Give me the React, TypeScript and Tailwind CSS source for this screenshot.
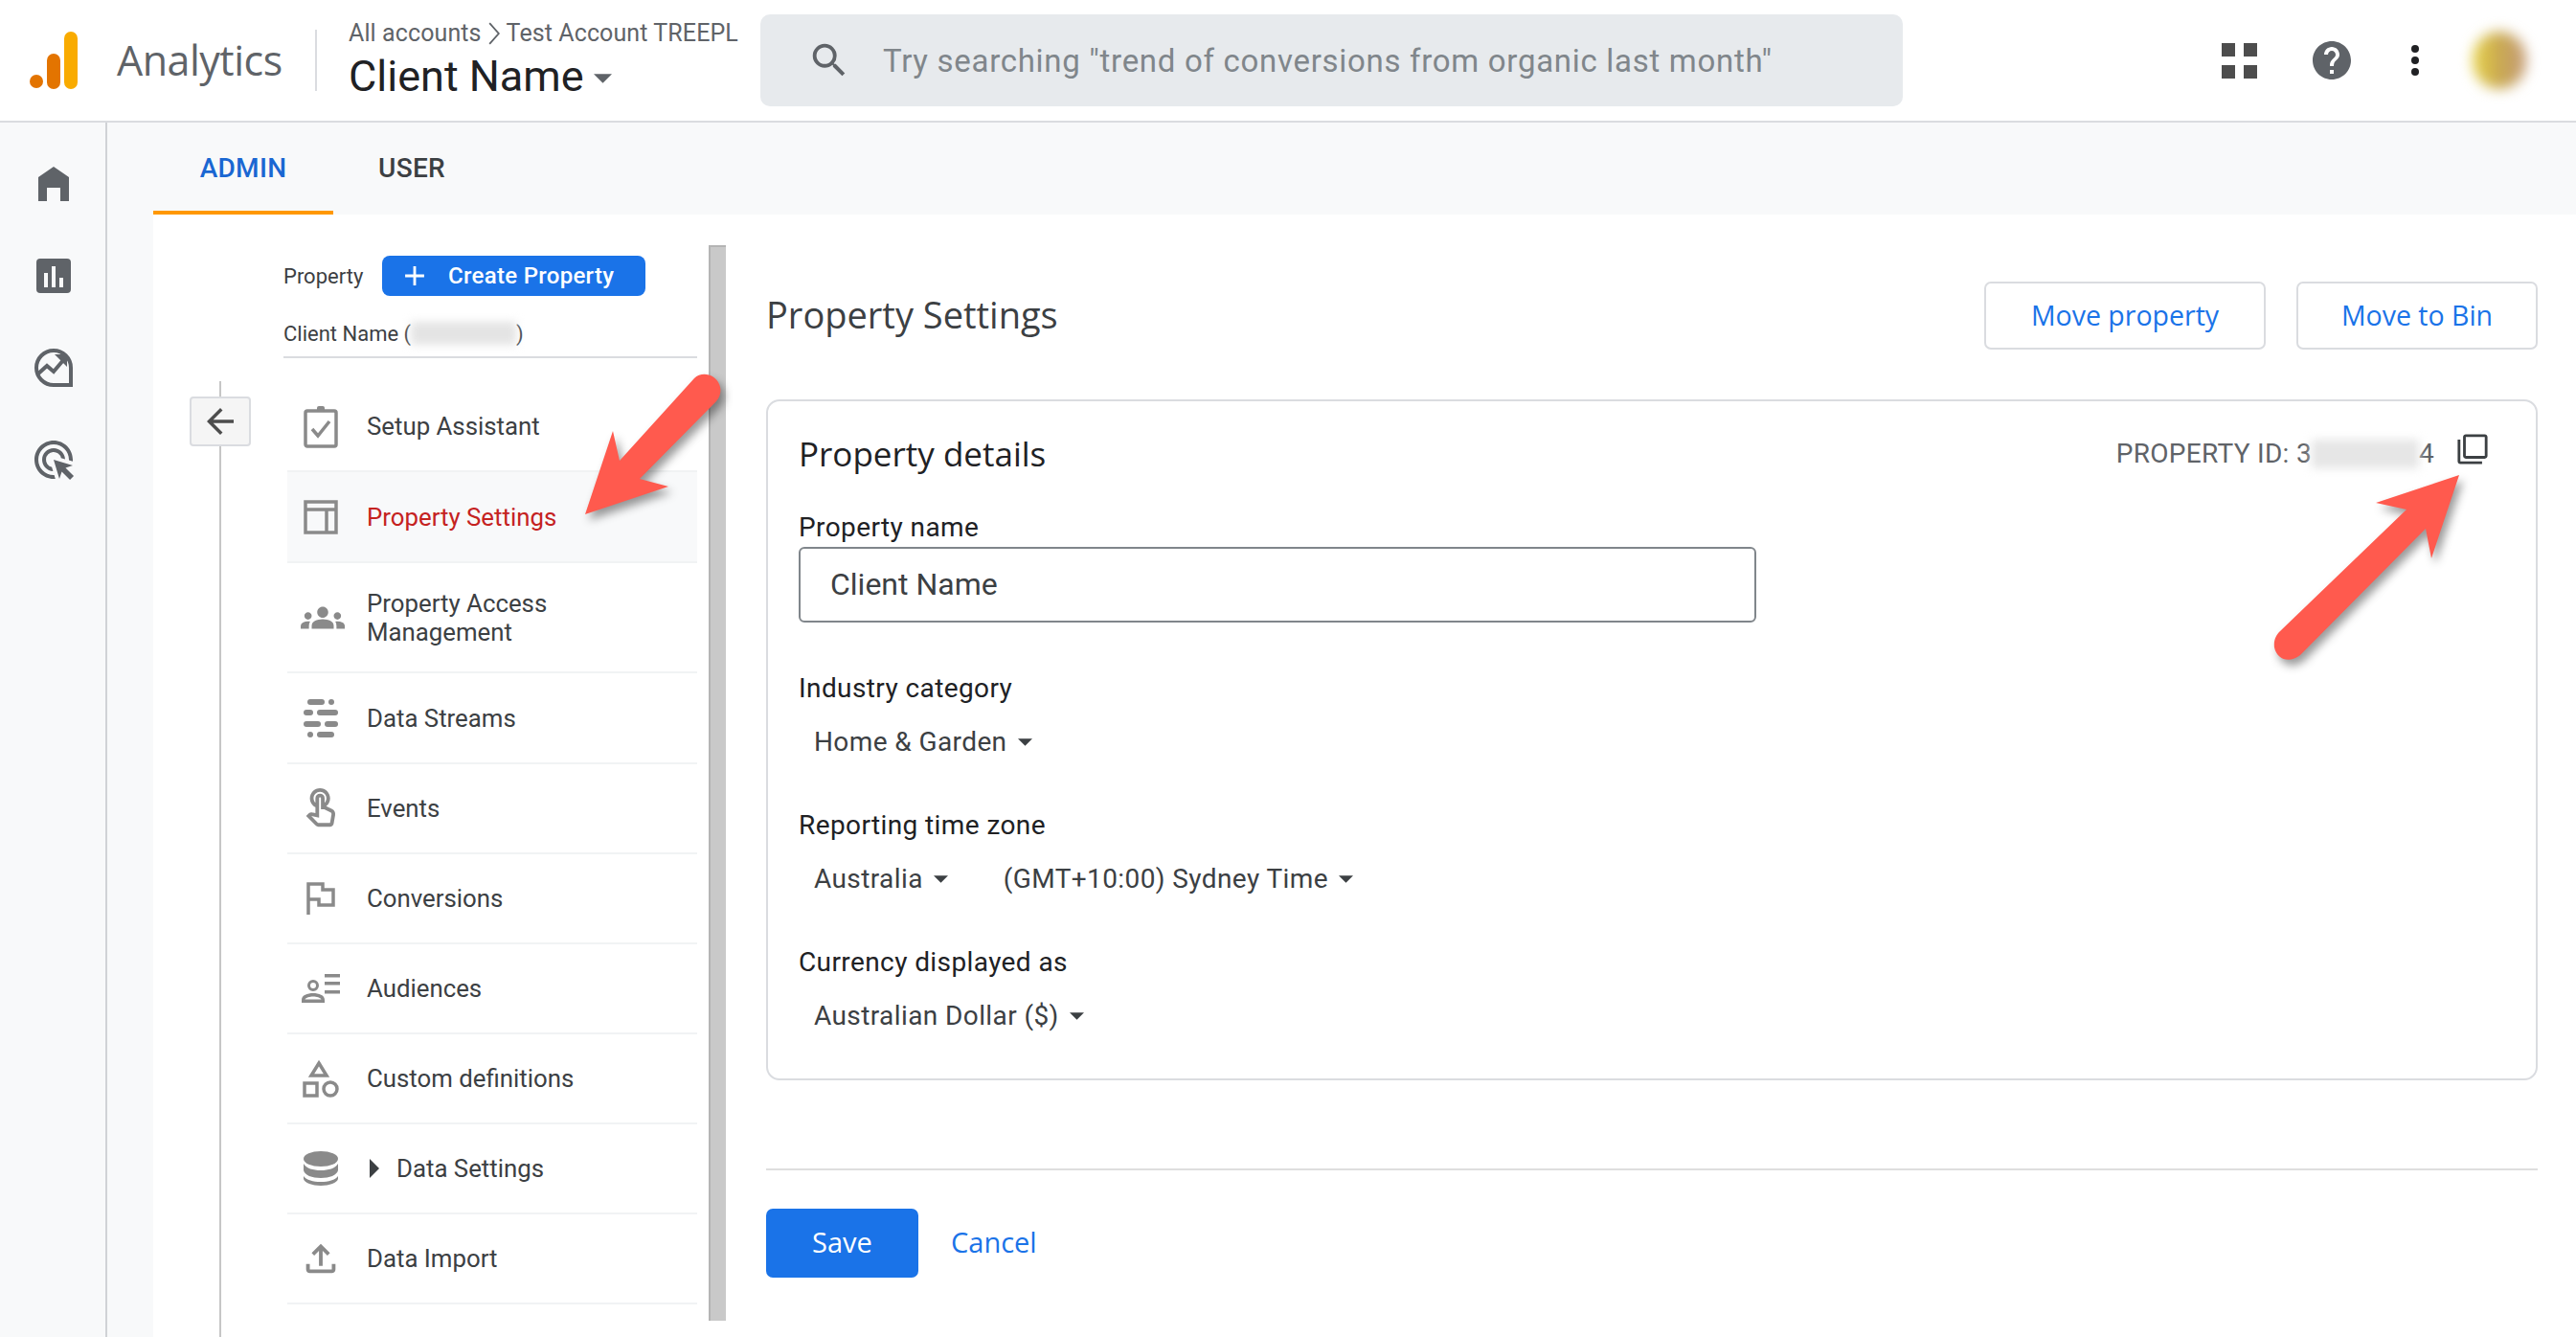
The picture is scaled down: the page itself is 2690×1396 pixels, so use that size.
import type { ReactNode } from "react";
import { MdOutlineAdsClick, MdOutlineTouchApp, MdOutlineFileUpload, MdSearch, MdHelp, MdGroups, MdFilterNone, MdArrowBack, MdAdd } from "react-icons/md";

const Caret = ({ className }: { className: string }) => (
  <svg viewBox="0 0 10 5" className={className} fill="currentColor">
    <path d="M0 0h10L5 5z" />
  </svg>
);

const SetupIcon = () => (
  <svg viewBox="0 0 36 46" className="w-[36px] h-[46px]" fill="none" stroke="#8a8a8a">
    <rect x="2" y="7" width="32" height="37" rx="2" strokeWidth="3.5" />
    <rect x="14" y="2" width="8" height="6" rx="2" fill="#8a8a8a" stroke="none" />
    <path d="M9 26l6 7 12-15" strokeWidth="3.5" />
  </svg>
);

const SettingsIcon = () => (
  <svg viewBox="0 0 36 36" className="w-[36px] h-[36px]" fill="none" stroke="#8a8a8a" strokeWidth="3.5">
    <rect x="2" y="2" width="32" height="32" />
    <path d="M2 10h32M24 10v24" />
  </svg>
);

const StreamsIcon = () => (
  <svg viewBox="0 0 36 40" className="w-[36px] h-[40px]" fill="#8a8a8a">
    <rect x="4" y="0" width="18" height="6" rx="3" />
    <circle cx="29" cy="3" r="3" />
    <rect x="0" y="11" width="10" height="6" rx="3" />
    <rect x="14" y="11" width="22" height="6" rx="3" />
    <rect x="0" y="23" width="18" height="6" rx="3" />
    <rect x="22" y="23" width="14" height="6" rx="3" />
    <circle cx="7" cy="37" r="3" />
    <rect x="14" y="34" width="18" height="6" rx="3" />
  </svg>
);

const FlagIcon = () => (
  <svg viewBox="0 0 30 34" className="w-[30px] h-[34px]" fill="none" stroke="#8a8a8a" strokeWidth="3.5">
    <path d="M2 34V2h15v6h11v16H13v-6H2" />
  </svg>
);

const AudienceIcon = () => (
  <svg viewBox="0 0 40 30" className="w-[40px] h-[30px]" fill="#8a8a8a">
    <circle cx="12" cy="12" r="4.5" fill="none" stroke="#8a8a8a" strokeWidth="3" />
    <path d="M0 30v-3c0-5 6-7 12-7s12 2 12 7v3zm3.500-3.500h17c-1-2-5-3-8.500-3s-7.500 1-8.500 3z" />
    <rect x="24" y="0" width="16" height="3.500" />
    <rect x="24" y="8" width="16" height="3.500" />
    <rect x="24" y="17" width="16" height="3.500" />
  </svg>
);

const CustomIcon = () => (
  <svg viewBox="0 0 38 40" className="w-[38px] h-[40px]" fill="none" stroke="#8a8a8a" strokeWidth="3.500">
    <path d="M17 4L25 17H9z" />
    <rect x="2" y="25" width="13" height="13" />
    <circle cx="29" cy="31" r="7" />
  </svg>
);

const DatabaseIcon = () => (
  <svg viewBox="0 0 36 36" className="w-[36px] h-[36px]" fill="#8a8a8a">
    <ellipse cx="18" cy="8" rx="18" ry="8" />
    <path d="M0 13c3 5 10 7 18 7s15-2 18-7v7c-1 5-9 8-18 8S1 25 0 20z" />
    <path d="M0 26c3 4 10 6 18 6s15-2 18-6v3c-1 4-9 7-18 7S1 33 0 29z" />
  </svg>
);

type NavItem = { icon: ReactNode; label: ReactNode; height: string; active?: boolean };

const navItems: NavItem[] = [
  { icon: <SetupIcon />, label: "Setup Assistant", height: "h-[94px]" },
  { icon: <SettingsIcon />, label: "Property Settings", height: "h-[95px]", active: true },
  { icon: <MdGroups className="ml-[3px] w-[46px] h-[46px] text-[#8a8a8a]" />, label: <>Property Access<br />Management</>, height: "h-[115px]" },
  { icon: <StreamsIcon />, label: "Data Streams", height: "h-[95px]" },
  { icon: <MdOutlineTouchApp className="w-[46px] h-[46px] text-[#8a8a8a]" />, label: "Events", height: "h-[94px]" },
  { icon: <FlagIcon />, label: "Conversions", height: "h-[94px]" },
  { icon: <AudienceIcon />, label: "Audiences", height: "h-[94px]" },
  { icon: <CustomIcon />, label: "Custom definitions", height: "h-[94px]" },
  {
    icon: <DatabaseIcon />,
    label: (
      <span className="flex items-center gap-[18px] pl-[3px]">
        <svg viewBox="0 0 10 20" className="w-[10px] h-[20px] fill-[#3c4043]">
          <path d="M0 0l10 10L0 20z" />
        </svg>
        Data Settings
      </span>
    ),
    height: "h-[94px]",
  },
  { icon: <MdOutlineFileUpload className="w-[46px] h-[46px] text-[#8a8a8a]" />, label: "Data Import", height: "h-[94px]" },
];

const fields = [
  { label: "Industry category", values: ["Home & Garden"] },
  { label: "Reporting time zone", values: ["Australia", "(GMT+10:00) Sydney Time"] },
  { label: "Currency displayed as", values: ["Australian Dollar ($)"] },
];

export default function App() {
  return (
    <div className="relative w-[2690px] h-[1396px] overflow-hidden bg-[#f8f9fa] font-['Roboto',sans-serif] flex flex-col">
      {/* Top bar */}
      <header className="h-[128px] shrink-0 bg-white border-b-2 border-[#dadce0] flex items-center">
        <svg viewBox="0 0 50 60" className="ml-[31px] w-[50px] h-[60px]">
          <circle cx="7" cy="52" r="7" fill="#e37400" />
          <rect x="18" y="23" width="14" height="37" rx="7" fill="#e37400" />
          <rect x="36" y="0" width="14" height="60" rx="7" fill="#f9ab00" />
        </svg>
        <span className="ml-[41px] w-[207px] text-[43px] text-[#5f6368] font-['Open_Sans',sans-serif] tracking-[-0.5px]">Analytics</span>
        <div className="w-[2px] h-[64px] bg-[#dadce0]" />
        <div className="ml-[33px] w-[430px] flex flex-col">
          <div className="flex items-center text-[25px] tracking-[0.1px] leading-[30px] text-[#5f6368] whitespace-nowrap">
            All accounts
            <svg viewBox="0 0 10 20" className="mx-[7px] w-[12px] h-[24px]" fill="none" stroke="#5f6368" strokeWidth="1.500">
              <path d="M1 1l8 9-8 9" />
            </svg>
            Test Account TREEPL
          </div>
          <div className="mt-[4px] flex items-center text-[45px] leading-[52px] text-[#202124]">
            Client Name
            <Caret className="ml-[10px] mt-[4px] w-[19px] h-[10px] text-[#5f6368]" />
          </div>
        </div>
        <div className="w-[1193px] h-[96px] rounded-[10px] bg-[#e7eaed] flex items-center">
          <MdSearch className="ml-[49px] w-[46px] h-[46px] text-[#5f6368]" />
          <span className="ml-[33px] pt-[2px] text-[33px] tracking-[0.7px] text-[#80868b] whitespace-nowrap">Try searching "trend of conversions from organic last month"</span>
        </div>
        <div className="ml-[333px] grid grid-cols-2 gap-x-[9px] gap-y-[9px]">
          <div className="w-[14px] h-[14px] bg-[#4d4d4d]" />
          <div className="w-[14px] h-[14px] bg-[#4d4d4d]" />
          <div className="w-[14px] h-[14px] bg-[#4d4d4d]" />
          <div className="w-[14px] h-[14px] bg-[#4d4d4d]" />
        </div>
        <MdHelp className="ml-[54px] w-[48px] h-[48px] text-[#5f6368]" />
        <div className="ml-[59px] flex flex-col gap-[4px]">
          <div className="w-[8px] h-[8px] rounded-full bg-[#202124]" />
          <div className="w-[8px] h-[8px] rounded-full bg-[#202124]" />
          <div className="w-[8px] h-[8px] rounded-full bg-[#202124]" />
        </div>
        <div className="ml-[56px] w-[56px] h-[60px] rounded-full blur-[7px] bg-gradient-to-r from-[#e8d44a] via-[#c9a94f] to-[#c49a78]" />
      </header>

      <div className="flex-1 flex min-h-0">
        {/* Left rail */}
        <aside className="w-[112px] shrink-0 border-r-2 border-[#d0d2d6] flex flex-col items-center pl-[2px] pt-[46px]">
          <svg viewBox="0 0 32 36" className="w-[32px] h-[36px] fill-[#5f6368]">
            <path d="M16 0l16 11v25h-9V22H9v14H0V11z" />
          </svg>
          <svg viewBox="0 0 36 36" className="mt-[60px] w-[36px] h-[36px]">
            <rect width="36" height="36" rx="4" fill="#5f6368" />
            <path d="M8 15h4v15H8zM16 8h4v22h-4zM24 20h4v10h-4z" fill="#f8f9fa" />
          </svg>
          <svg viewBox="0 0 40 40" className="mt-[58px] w-[40px] h-[40px]" fill="none" stroke="#5f6368">
            <path d="M20 2a18 18 0 1 0 0 36h18V20A18 18 0 0 0 20 2z" strokeWidth="4" />
            <path d="M3 27l10-9 7 6 11-13" strokeWidth="4" />
            <path d="M21 6h13v13z" fill="#5f6368" stroke="none" />
            <circle cx="34" cy="34" r="2" fill="#f8f9fa" stroke="none" />
          </svg>
          <MdOutlineAdsClick className="mt-[52px] w-[48px] h-[48px] text-[#5f6368]" />
        </aside>

        <main className="flex-1 min-w-0 flex flex-col">
          {/* Tabs */}
          <div className="h-[96px] shrink-0 pl-[48px] flex text-[28px] tracking-[0.3px] font-medium">
            <div className="w-[188px] pt-[4px] flex items-center justify-center border-b-[4px] border-[#ff9800] text-[#1a67d2]">ADMIN</div>
            <div className="w-[164px] flex items-center justify-center text-[#3c4043]">USER</div>
          </div>

          <div className="flex-1 min-h-0 ml-[48px] bg-white flex">
            {/* Back button column */}
            <div className="w-[136px] shrink-0 pl-[38px] pr-[34px] flex flex-col items-center pt-[174px]">
              <div className="w-[2px] h-[16px] bg-[#c6c6c6]" />
              <button className="w-[64px] h-[52px] shrink-0 rounded-[4px] border-2 border-[#dadce0] bg-[#f5f5f5] flex items-center justify-center">
                <MdArrowBack className="w-[42px] h-[42px] text-[#4d4d4d]" />
              </button>
              <div className="w-[2px] flex-1 bg-[#c6c6c6]" />
            </div>

            {/* Property nav */}
            <div className="w-[432px] shrink-0 pt-[43px]">
              <div className="flex items-center">
                <span className="w-[103px] text-[22px] text-[#3c4043]">Property</span>
                <button className="w-[275px] h-[42px] rounded-[8px] bg-[#1a73e8] text-white flex items-center text-[24px] tracking-[0.3px] font-medium whitespace-nowrap">
                  <MdAdd className="ml-[17px] w-[34px] h-[34px]" />
                  <span className="ml-[18px]">Create Property</span>
                </button>
              </div>
              <div className="mt-[20px] h-[45px] border-b-2 border-[#dadce0] flex items-center pb-[5px] text-[22px] text-[#3c4043] whitespace-nowrap">
                Client Name (
                <div className="w-[110px] h-[24px] bg-[#e4e4e4] blur-[5px]" />
                )
              </div>
              <ul className="ml-[4px] mt-[25px]">
                {navItems.map((item, i) => (
                  <li key={i} className={`${item.height} border-b-2 border-[#f1f3f4] flex items-center ${item.active ? "bg-[#f8f9fa] text-[#c5221f]" : "text-[#3c4043]"}`}>
                    <div className="w-[83px] shrink-0 flex justify-center pr-[13px]">{item.icon}</div>
                    <div className="text-[25.8px] leading-[30px]">{item.label}</div>
                  </li>
                ))}
              </ul>
            </div>

            {/* Scrollbar */}
            <div className="ml-[12px] mt-[32px] w-[18px] h-[1123px] shrink-0 bg-[#c9c9c9] border-l-2 border-t-2 border-[#b4b4b4]" />

            {/* Property settings */}
            <section className="flex-1 min-w-0 pl-[42px] pr-[40px]">
              <div className="mt-[70px] flex items-center justify-between">
                <h1 className="text-[38px] text-[#3c4043] font-['Open_Sans',sans-serif] mb-[2px]">Property Settings</h1>
                <div className="flex gap-[32px]">
                  <button className="w-[294px] h-[71px] rounded-[7px] border-2 border-[#dadce0] text-[28.5px] font-medium text-[#1a73e8] font-['Open_Sans',sans-serif]">Move property</button>
                  <button className="w-[252px] h-[71px] rounded-[7px] border-2 border-[#dadce0] text-[28.5px] font-medium text-[#1a73e8] font-['Open_Sans',sans-serif]">Move to Bin</button>
                </div>
              </div>

              <div className="mt-[52px] h-[711px] rounded-[14px] border-2 border-[#dadce0] pl-[32px] pr-[49px]">
                <div className="mt-[29px] flex items-center justify-between">
                  <h2 className="text-[35px] text-[#202124] font-['Open_Sans',sans-serif]">Property details</h2>
                  <div className="flex items-center text-[28px] tracking-[0.3px] text-[#5f6368]">
                    PROPERTY ID: 3
                    <div className="w-[112px] h-[30px] bg-[#e6e6e6] blur-[5px]" />
                    4
                    <MdFilterNone className="ml-[23px] mb-[10px] w-[34px] h-[34px] text-[#3c4043]" />
                  </div>
                </div>

                <div className="mt-[32px] text-[28px] tracking-[0.4px] leading-[36px] text-[#202124]">Property name</div>
                <div className="mt-[2px] w-[1000px] h-[79px] rounded-[6px] border-2 border-[#80868b] pl-[31px] flex items-center text-[32px] text-[#3c4043]">Client Name</div>

                {fields.map((field) => (
                  <div key={field.label} className="mt-[51px]">
                    <div className="text-[28px] tracking-[0.4px] leading-[36px] text-[#202124]">{field.label}</div>
                    <div className="mt-[20px] pl-[16px] flex items-center text-[28px] tracking-[0.4px] leading-[36px] text-[#3c4043] gap-[58px]">
                      {field.values.map((value) => (
                        <span key={value} className="flex items-center">
                          {value}
                          <Caret className="ml-[11px] w-[15px] h-[8px] text-[#3c4043]" />
                        </span>
                      ))}
                    </div>
                  </div>
                ))}
              </div>

              <div className="mt-[92px] h-[2px] bg-[#dedede]" />
              <div className="mt-[40px] flex items-center text-[29px] font-medium font-['Open_Sans',sans-serif]">
                <button className="w-[159px] h-[72px] rounded-[7px] bg-[#1a73e8] text-white pb-[2px]">Save</button>
                <button className="ml-[34px] text-[#1a73e8] pb-[2px]">Cancel</button>
              </div>
            </section>
          </div>
        </main>
      </div>

      {/* Callout arrows */}
      <svg viewBox="0 0 2690 1396" className="absolute inset-0 w-[2690px] h-[1396px] pointer-events-none drop-shadow-[4px_6px_5px_rgba(0,0,0,0.4)]" fill="#ff5a4e">
        <path d="M640 450l7 31L725 395c8-8 22-4 26 6 3 7 1 13-3 18L668 500l30 8-87 29z" />
        <path d="M2568 496L2539 583L2533 552L2402 684C2392 692 2378 690 2375 676C2374 668 2377 663 2381 659L2513 532L2481 525Z" />
      </svg>
    </div>
  );
}
